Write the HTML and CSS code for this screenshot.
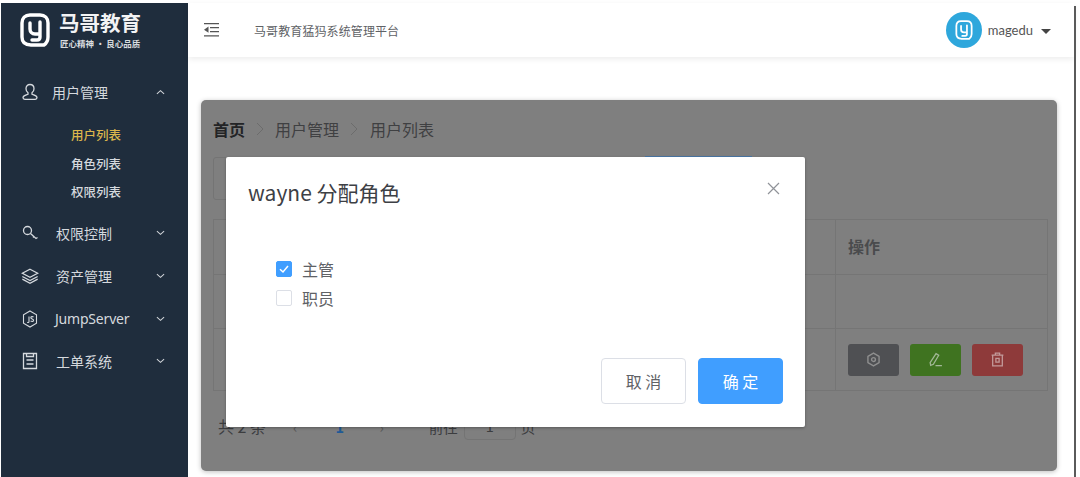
FILE: index.html
```html
<!DOCTYPE html>
<html lang="zh">
<head>
<meta charset="utf-8">
<title>马哥教育猛犸系统管理平台</title>
<link rel="stylesheet" href="styles.css">
</head>
<body>
<div class="app">
  <aside class="side">
    <div class="brand">
      <svg class="brand-logo" viewBox="0 0 30 34" fill="none" stroke="#fff" stroke-width="3.400" stroke-linecap="round">
        <path d="M23 32H11C5 32 2 29 2 24V10C2 5 5 2 10 2H20C25 2 28 5 28 10V24C28 28 27 30 24 32"/>
        <path d="M10 10V16C10 19 12 21 15 21H20M20 9V24C20 26 19 27 17 27H12"/>
      </svg>
      <div class="brand-text">
        <div class="brand-name">马哥教育</div>
        <div class="brand-sub">匠心精神 · 良心品质</div>
      </div>
    </div>
    <nav class="menu">
      <div class="menu-item first">
        <svg class="mi" viewBox="0 0 18 18" fill="none" stroke="#d5d9de" stroke-width="1.300"><path d="M9 1.500c2.600 0 4 1.800 4 4.200 0 2-1 3.300-2 4.100v1.400c1.500.6 5 1.200 5 3.300 0 1-.8 1.800-1.800 1.800H3.800C2.800 16.300 2 15.500 2 14.500c0-2.100 3.500-2.700 5-3.300V9.800C6 9 5 7.700 5 5.700 5 3.300 6.400 1.500 9 1.500Z"/></svg>
        <span class="ml tight">用户管理</span>
        <svg class="chev" viewBox="0 0 10 6" fill="none" stroke="#cfd3d8" stroke-width="1.200"><path d="M1 5 5 1.500 9 5"/></svg>
      </div>
      <div class="sub">
        <div class="sub-item on">用户列表</div>
        <div class="sub-item">角色列表</div>
        <div class="sub-item">权限列表</div>
      </div>
      <div class="menu-item">
        <svg class="mi" viewBox="0 0 18 18" fill="none" stroke="#d5d9de" stroke-width="1.300"><circle cx="6.500" cy="6.500" r="4"/><path d="M9.500 9.500 15 14.500 16.500 13.500M13 12.500l-1 1"/></svg>
        <span class="ml">权限控制</span>
        <svg class="chev" viewBox="0 0 10 6" fill="none" stroke="#cfd3d8" stroke-width="1.200"><path d="M1 1 5 4.500 9 1"/></svg>
      </div>
      <div class="menu-item">
        <svg class="mi" viewBox="0 0 20 18" fill="none" stroke="#d5d9de" stroke-width="1.400"><path d="M10 1.500 18.500 6 10 10.500 1.500 6Z"/><path d="M1.500 9.500 10 14 18.500 9.500M1.500 12.500 10 17 18.500 12.500"/></svg>
        <span class="ml">资产管理</span>
        <svg class="chev" viewBox="0 0 10 6" fill="none" stroke="#cfd3d8" stroke-width="1.200"><path d="M1 1 5 4.500 9 1"/></svg>
      </div>
      <div class="menu-item">
        <svg class="mi" viewBox="0 0 18 18" fill="none" stroke="#d5d9de" stroke-width="1.100"><path d="M9 1 15.500 4.700V13.300L9 17 2.500 13.300V4.700Z"/><path d="M8 6.500V11.500c0 1-1 1.200-1.800.7M12.500 7.200c-.8-.9-2.700-.8-2.700.5 0 1.500 2.800 1 2.800 2.600 0 1.300-2 1.500-3 .5"/></svg>
        <span class="ml js">JumpServer</span>
        <svg class="chev" viewBox="0 0 10 6" fill="none" stroke="#cfd3d8" stroke-width="1.200"><path d="M1 1 5 4.500 9 1"/></svg>
      </div>
      <div class="menu-item">
        <svg class="mi" viewBox="0 0 18 18" fill="none" stroke="#d5d9de" stroke-width="1.300"><path d="M2.500 1.500H15.500V16.500H2.500ZM5.500 1.500V4.500H12.500V1.500M5.500 8H12.500M5.500 12H12.500"/></svg>
        <span class="ml">工单系统</span>
        <svg class="chev" viewBox="0 0 10 6" fill="none" stroke="#cfd3d8" stroke-width="1.200"><path d="M1 1 5 4.500 9 1"/></svg>
      </div>
    </nav>
  </aside>

  <div class="main">
    <header class="top">
      <svg class="fold" viewBox="0 0 15 14" fill="#555"><path d="M0 0H15V1.300H0ZM0 12.200H15V13.500H0ZM6 4H15V5.200H6ZM6 8H15V9.200H6ZM4.500 3.500V9.800L0 6.700Z"/></svg>
      <div class="title">马哥教育猛犸系统管理平台</div>
      <div class="user">
        <span class="avatar">
          <svg viewBox="0 0 30 34" fill="none" stroke="#fff" stroke-width="3" stroke-linecap="round"><path d="M23 32H11C5 32 2 29 2 24V10C2 5 5 2 10 2H20C25 2 28 5 28 10V24C28 28 27 30 24 32"/><path d="M10 10V16C10 19 12 21 15 21H20M20 9V24C20 26 19 27 17 27H12"/></svg>
        </span>
        <span class="uname">magedu</span>
        <span class="caret"></span>
      </div>
    </header>

    <section class="card">
      <div class="crumbs">
        <b>首页</b>
        <svg class="sep" viewBox="0 0 8 14" fill="none" stroke="#6c6c6c" stroke-width="1"><path d="M1 1 7 7 1 13"/></svg>
        <span>用户管理</span>
        <svg class="sep" viewBox="0 0 8 14" fill="none" stroke="#6c6c6c" stroke-width="1"><path d="M1 1 7 7 1 13"/></svg>
        <span>用户列表</span>
      </div>
      <div class="tools">
        <div class="search"></div>
        <div class="add"></div>
      </div>
      <div class="table">
        <div class="row head"><div class="c1"></div><div class="c2">操作</div></div>
        <div class="row mid"><div class="c1"></div><div class="c2"></div></div>
        <div class="row last">
          <div class="c1"></div>
          <div class="c2 ops">
            <span class="op grey"><svg viewBox="0 0 14 14" fill="none" stroke="#8f8f8f" stroke-width="1.300" stroke-linejoin="round"><path d="M7 1 12.200 4V10L7 13 1.800 10V4Z"/><circle cx="7" cy="7" r="1.800"/></svg></span>
            <span class="op green"><svg viewBox="0 0 14 14" fill="none" stroke="#a2b896" stroke-width="1.200"><path d="M2 10 7.500 1.500 10 3 5 11.500 2.500 12.500ZM7 12.800H13"/></svg></span>
            <span class="op red"><svg viewBox="0 0 14 14" fill="none" stroke="#c29a9a" stroke-width="1.200"><path d="M1.500 3H12.500M5 3V1H9V3M2.500 3V13H11.500V3M5.500 6H8.500V9.500H5.500Z"/></svg></span>
          </div>
        </div>
      </div>
      <div class="pager">
        <span class="total">共 2 条</span>
        <span class="arrow">‹</span>
        <span class="page">1</span>
        <span class="arrow">›</span>
        <span class="goto">前往</span>
        <span class="jump">1</span>
        <span class="ye">页</span>
      </div>
    </section>
  </div>

  <div class="rule"></div>
</div>

<div class="dialog">
  <div class="d-head">
    <span class="d-title">wayne 分配角色</span>
    <svg class="d-close" viewBox="0 0 13 13" fill="none" stroke="#909399" stroke-width="1.200"><path d="M1 1 12 12M12 1 1 12"/></svg>
  </div>
  <div class="d-body">
    <label class="check">
      <span class="box on"><svg viewBox="0 0 16 16" fill="none" stroke="#fff" stroke-width="1.500"><path d="M4 8.200 7 11 12 5"/></svg></span>主管
    </label>
    <label class="check">
      <span class="box"></span>职员
    </label>
  </div>
  <div class="d-foot">
    <span class="btn">取 消</span>
    <span class="btn primary">确 定</span>
  </div>
</div>
</body>
</html>
```
FILE: styles.css
```css
* { box-sizing: border-box; }
html, body { margin: 0; height: 100%; }
body {
  background: #fff;
  font-family: "Noto Sans CJK SC", "Noto Sans", sans-serif;
  overflow: hidden;
  position: relative;
}
.app { display: flex; height: 477px; padding: 3px 0 0 1px; }

.side { width: 187px; flex: none; background: #1f2d3d; color: #d5d9de; margin-bottom: -3px; }
.brand { display: flex; align-items: center; height: 56px; padding-left: 19px; gap: 9px; }
.brand-logo { width: 30px; height: 34px; flex: none; margin-top: -2px; }
.brand-text { margin-top: -3px; }
.brand-name { font-size: 20.500px; font-weight: 700; line-height: 24px; color: #f2f3f4; }
.brand-sub { font-size: 8.500px; line-height: 12px; color: #d9dcdf; margin: 3px 0 0 1px; font-weight: 700; white-space: nowrap; }

.menu { padding-top: 16px; }
.menu-item { display: flex; align-items: center; height: 42.700px; padding: 0 23px 0 20px; font-size: 14px; }
.menu-item.first { height: 34px; }
.mi { width: 18px; height: 18px; flex: none; }
.ml { margin-left: 17px; }
.ml.tight { margin-left: 13px; }
.ml.js { margin-left: 16px; letter-spacing: -0.200px; font-family: "Noto Sans", sans-serif; }
.chev { width: 9px; height: 6px; margin-left: auto; flex: none; }
.sub { padding: 12px 0 5px; }
.sub-item { height: 28.600px; line-height: 28.600px; padding-left: 70px; font-size: 12.500px; color: #d5d9de; font-weight: 500; }
.sub-item.on { color: #dcb64c; }

.main { flex: 1; min-width: 0; display: flex; flex-direction: column; }
.top {
  display: flex; align-items: center; height: 54px; flex: none;
  padding: 0 23px 0 16px;
  box-shadow: 0 2px 6px rgba(0,0,0,.08);
}
.fold { width: 15px; height: 14px; flex: none; }
.title { margin-left: 35px; font-size: 12px; letter-spacing: 0.100px; color: #606266; }
.user { margin-left: auto; display: flex; align-items: center; }
.avatar { width: 36px; height: 36px; border-radius: 50%; background: #2ea7dc; display: flex; align-items: center; justify-content: center; }
.avatar svg { width: 18px; height: 20px; }
.uname { margin-left: 6px; font-size: 13px; color: #555; font-family: "Lato", sans-serif; }
.caret { margin-left: 8px; margin-top: 2px; border: 5px solid transparent; border-top-color: #444; border-bottom: 0; }

.card {
  width: 856px; height: 371px; margin: 43px 0 0 13px; flex: none;
  background: #7f7f7f; border-radius: 5px; padding: 17px 9px 0 12px;
  box-shadow: 0 1px 5px rgba(0,0,0,.25);
  color: #303133;
}
.crumbs { display: flex; align-items: center; font-size: 16px; line-height: 24px; color: #3f4042; }
.crumbs b { color: #232426; }
.sep { width: 8px; height: 14px; margin: 0 11px; flex: none; }
.crumbs .sep:nth-of-type(2) { margin-right: 12px; }
.tools { display: flex; height: 43px; margin-top: 16px; }
.search { width: 300px; height: 43px; border: 1px solid #747474; border-radius: 3px; }
.add { width: 107px; height: 2px; background: #4a77a6; margin: -1px 0 0 132px; }
.table { margin-top: 19px; border: 1px solid #757575; border-width: 1px 0 0 1px; width: 835px; }
.row { display: flex; border-bottom: 1px solid #757575; }
.row.head { height: 55px; }
.row.mid { height: 54px; }
.row.last { height: 62px; }
.c1 { width: 622px; border-right: 1px solid #757575; }
.c2 { flex: 1; border-right: 1px solid #757575; padding-left: 12px; display: flex; align-items: center; }
.head .c2 { font-size: 16px; font-weight: 700; color: #4a4b4d; padding-bottom: 2px; }
.ops { gap: 11px; }
.op { width: 51px; height: 32px; border-radius: 3px; display: flex; align-items: center; justify-content: center; }
.op svg { width: 15px; height: 15px; }
.grey { background: #4f5053; }
.green { background: #3f7320; }
.red { background: #8e3a3a; }
.pager { display: flex; align-items: center; height: 28px; margin-top: 21px; padding-left: 5px; font-size: 14.500px; color: #3c3d3f; }
.total { width: 74px; font-size: 16px; line-height: 24px; margin-top: -1px; }
.arrow { color: #5a5a5a; }
.pager .arrow:nth-child(2) { margin-left: 1px; }
.page { margin-left: 38px; width: 4px; color: #1f5a96; font-weight: 700; }
.pager .arrow:nth-child(4) { margin-left: 40px; }
.goto { margin-left: 45px; }
.jump { width: 52px; height: 28px; margin-left: 6px; border: 1px solid #747474; border-radius: 4px; text-align: center; line-height: 26px; }
.ye { margin-left: 5px; }

.rule { width: 2px; margin: 3px 4px -3px 0; background: #5a5a5a; flex: none; }

.dialog {
  position: absolute; left: 226px; top: 157px; width: 579px; height: 270px;
  background: #fff; border-radius: 2px;
  box-shadow: 0 1px 3px rgba(0,0,0,.3);
  display: flex; flex-direction: column;
}
.d-head { display: flex; justify-content: space-between; padding: 20px 25px 0 22px; height: 97px; }
.d-title { font-size: 21px; line-height: 30px; color: #3d4045; }
.d-close { width: 13px; height: 13px; margin-top: 5px; }
.d-body { padding-left: 50px; flex: 1; }
.check { display: flex; align-items: center; height: 29px; font-size: 16px; color: #606266; }
.box { width: 16px; height: 16px; border: 1px solid #dcdfe6; border-radius: 2px; margin-right: 10px; background: #fff; flex: none; }
.box svg { display: block; width: 16px; height: 16px; margin: -1px; }
.box.on { background: #409eff; border-color: #409eff; }
.d-foot { display: flex; justify-content: flex-end; gap: 12px; padding: 0 22px 23px 0; }
.btn { width: 85px; height: 46px; border: 1px solid #dcdfe6; border-radius: 4px; display: flex; align-items: center; justify-content: center; font-size: 16px; color: #606266; }
.btn.primary { background: #409eff; border-color: #409eff; color: #fff; }
```
